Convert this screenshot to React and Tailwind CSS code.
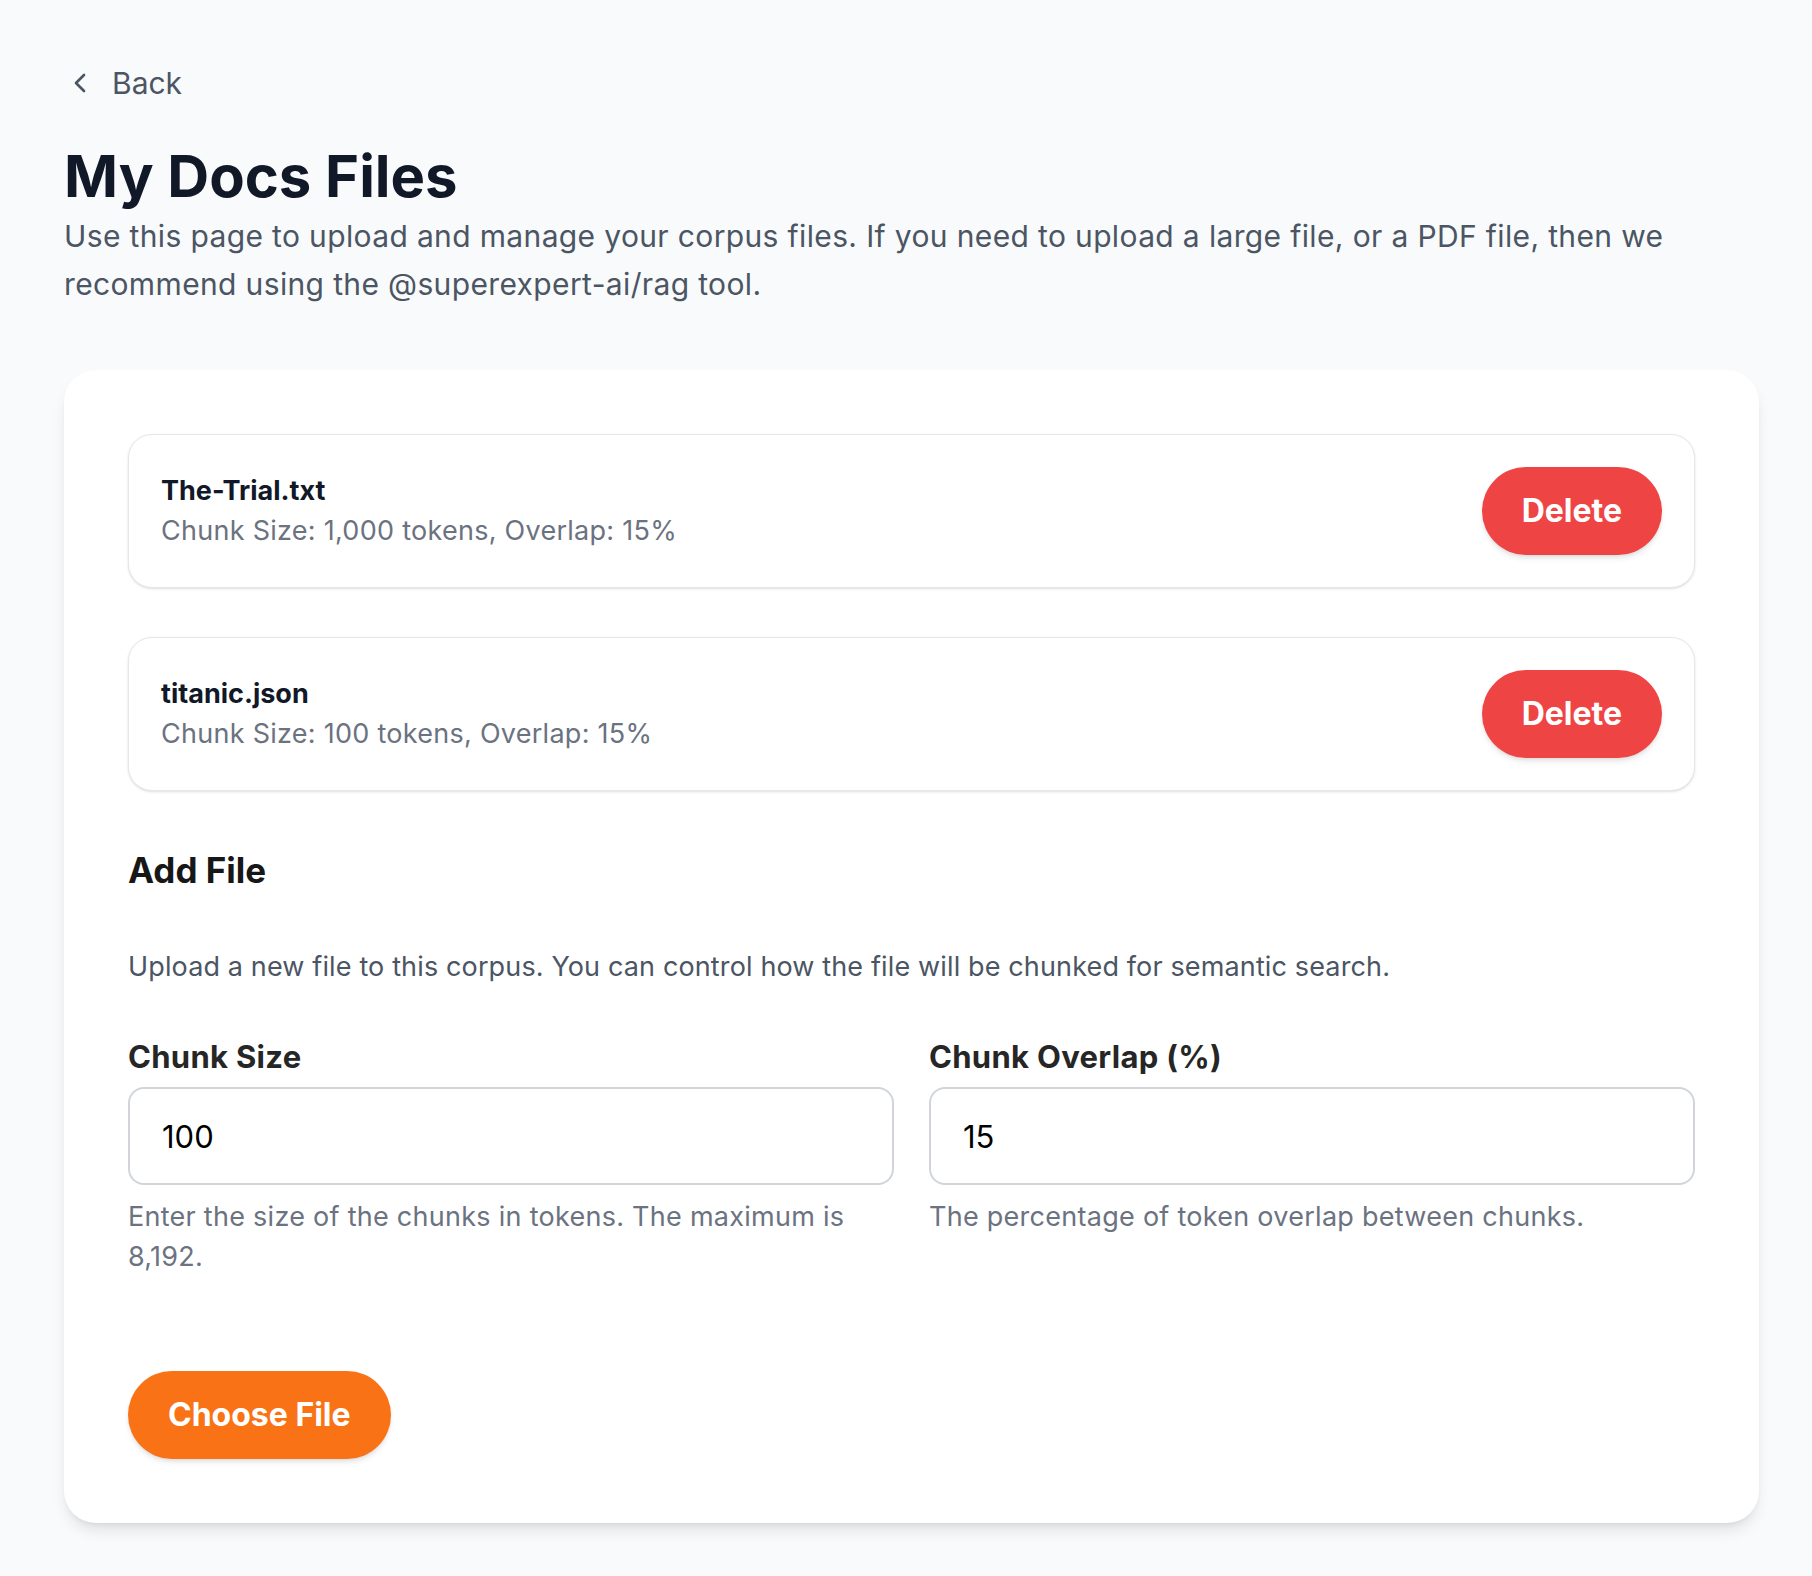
import { ChevronLeft } from 'lucide-react';

const files = [
  { name: 'The-Trial.txt', chunkSize: '1,000', overlap: 15 },
  { name: 'titanic.json', chunkSize: '100', overlap: 15 },
];

function FileRow({ file }) {
  return (
    <div className="flex items-center justify-between rounded-3xl border border-[#e5e7eb] bg-white p-8 shadow-sm">
      <div>
        <div className="text-[27px] font-bold leading-[40px] text-[#111827]">{file.name}</div>
        <div className="text-[27px] leading-[40px] tracking-[0.01em] text-[#6b7280]">
          Chunk Size: {file.chunkSize} tokens, Overlap: {file.overlap}%
        </div>
      </div>
      <button className="h-[88px] rounded-full bg-[#ef4444] px-10 text-[32px] font-bold text-white shadow-md">
        Delete
      </button>
    </div>
  );
}

export default function App() {
  return (
    <div
      className="min-h-screen bg-[#f9fafb] pb-12 pl-16 pr-[53px] pt-[63px]"
      style={{ fontFamily: 'Inter, "Liberation Sans", sans-serif' }}
    >
      {/* Back link */}
      <button className="flex h-10 items-center gap-4 text-[30px] text-[#4b5563]">
        <ChevronLeft className="h-8 w-8" strokeWidth={2} />
        <span>Back</span>
      </button>

      {/* Header */}
      <h1 className="mt-[41px] text-[58px] font-bold leading-[64px] text-[#111827]">My Docs Files</h1>
      <p className="mt-1 text-[30px] leading-[48px] tracking-[0.012em] text-[#4b5563]">
        Use this page to upload and manage your corpus files. If you need to upload a large file, or a PDF
        file, then we recommend using the @superexpert-ai/rag tool.
      </p>

      {/* Card */}
      <div className="mt-[62px] rounded-[32px] bg-white p-16 shadow-lg">
        <div className="flex flex-col gap-[49px]">
          {files.map((file) => (
            <FileRow key={file.name} file={file} />
          ))}
        </div>

        {/* Add file */}
        <h2 className="mt-[57px] text-[35px] font-bold leading-[44px] text-[#171717]">Add File</h2>
        <p className="mt-[55px] text-[27px] leading-[40px] tracking-[0.005em] text-[#4b5563]">
          Upload a new file to this corpus. You can control how the file will be chunked for semantic search.
        </p>

        <div className="mt-[50px] grid grid-cols-2 gap-[35px]">
          <div>
            <label className="block text-[31px] font-bold leading-[40px] tracking-[0.01em] text-[#262626]">Chunk Size</label>
            <input
              type="text"
              defaultValue="100"
              className="mt-[10px] h-[98px] w-full rounded-2xl border-2 border-[#d1d5db] bg-white px-8 text-[31px] text-black outline-none"
            />
            <p className="mt-3 text-[27px] leading-[40px] tracking-[0.01em] text-[#6b7280]">
              Enter the size of the chunks in tokens. The maximum is 8,192.
            </p>
          </div>
          <div>
            <label className="block text-[31px] font-bold leading-[40px] tracking-[0.01em] text-[#262626]">Chunk Overlap (%)</label>
            <input
              type="text"
              defaultValue="15"
              className="mt-[10px] h-[98px] w-full rounded-2xl border-2 border-[#d1d5db] bg-white px-8 text-[31px] text-black outline-none"
            />
            <p className="mt-3 text-[27px] leading-[40px] tracking-[0.01em] text-[#6b7280]">
              The percentage of token overlap between chunks.
            </p>
          </div>
        </div>

        <button className="mt-[94px] h-[88px] rounded-full bg-[#f97316] px-10 text-[32px] font-bold text-white shadow-md">
          Choose File
        </button>
      </div>
    </div>
  );
}
